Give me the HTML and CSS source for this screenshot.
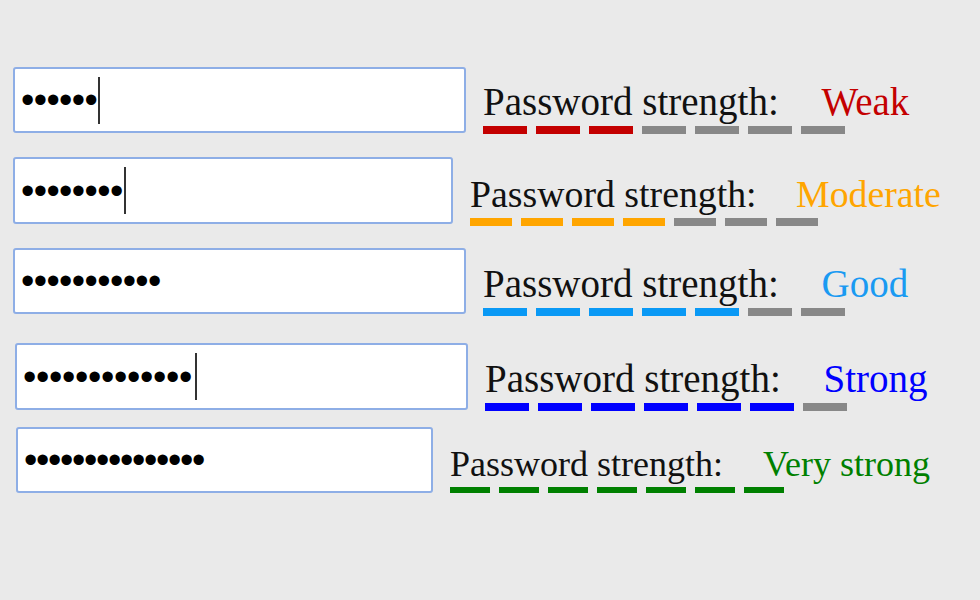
FILE: index.html
```html
<!DOCTYPE html>
<html lang="en">
<head>
  <meta charset="UTF-8" />
  <meta name="viewport" content="width=device-width, initial-scale=1.0" />
  <title>Password strength</title>
  <link rel="stylesheet" href="styles.css">
</head>
<body>
  <div class="rows">
    <div class="row row-weak">
      <div class="field"><span class="dots">••••••</span><span class="caret"></span></div>
      <div class="meter">
        <div class="label">Password strength: <span class="value">Weak</span></div>
        <div class="bar">
          <span class="on"></span><span class="on"></span><span class="on"></span><span></span><span></span><span></span><span></span>
        </div>
      </div>
    </div>

    <div class="row row-moderate">
      <div class="field"><span class="dots">••••••••</span><span class="caret"></span></div>
      <div class="meter">
        <div class="label">Password strength: <span class="value">Moderate</span></div>
        <div class="bar">
          <span class="on"></span><span class="on"></span><span class="on"></span><span class="on"></span><span></span><span></span><span></span>
        </div>
      </div>
    </div>

    <div class="row row-good">
      <div class="field"><span class="dots">•••••••••••</span></div>
      <div class="meter">
        <div class="label">Password strength: <span class="value">Good</span></div>
        <div class="bar">
          <span class="on"></span><span class="on"></span><span class="on"></span><span class="on"></span><span class="on"></span><span></span><span></span>
        </div>
      </div>
    </div>

    <div class="row row-strong">
      <div class="field"><span class="dots">•••••••••••••</span><span class="caret"></span></div>
      <div class="meter">
        <div class="label">Password strength: <span class="value">Strong</span></div>
        <div class="bar">
          <span class="on"></span><span class="on"></span><span class="on"></span><span class="on"></span><span class="on"></span><span class="on"></span><span></span>
        </div>
      </div>
    </div>

    <div class="row row-verystrong">
      <div class="field"><span class="dots">•••••••••••••••</span></div>
      <div class="meter">
        <div class="label">Password strength: <span class="value">Very strong</span></div>
        <div class="bar">
          <span class="on"></span><span class="on"></span><span class="on"></span><span class="on"></span><span class="on"></span><span class="on"></span><span class="on"></span>
        </div>
      </div>
    </div>
  </div>
</body>
</html>
```

FILE: styles.css
```css
body {
  margin: 0;
  background: #eaeaea;
  font-family: "Liberation Serif", "Times New Roman", serif;
  color: #111;
}
.rows {
  padding-top: 67px;
}
.row {
  display: flex;
  align-items: flex-end;
  gap: 17px;
  margin-left: 13px;
}
.field {
  box-sizing: border-box;
  width: 453px;
  height: 66px;
  background: #fff;
  border: 2px solid #8eaee6;
  border-radius: 3px;
  display: flex;
  align-items: center;
  padding-left: 6px;
}
.dots {
  font-family: "Liberation Sans", Arial, sans-serif;
  font-size: 38px;
  letter-spacing: -0.6px;
  line-height: 1;
  color: #000;
}
.caret {
  width: 2px;
  height: 47px;
  background: #333;
  margin-left: 1px;
}
.meter {
  margin-bottom: -1px;
}
.label {
  font-size: 39px;
  line-height: 1.1;
  white-space: nowrap;
}
.value {
  margin-left: 33px;
}
.bar {
  display: flex;
  gap: 9px;
  margin-top: 2px;
}
.bar span {
  width: 44px;
  height: 8px;
  background: #888;
}

.row-weak .value { color: #c40000; }
.row-weak .bar .on { background: #c40000; }

.row-moderate { margin-top: 24px; }
.row-moderate .field { width: 440px; height: 67px; }
.row-moderate .label { font-size: 37.8px; }
.row-moderate .value { color: #ffa500; margin-left: 30px; }
.row-moderate .bar span { width: 42px; }
.row-moderate .bar .on { background: #ffa500; }
.row-moderate .meter { margin-bottom: -2px; }

.row-good { margin-top: 24px; }
.row-good .value { color: #1a9af2; }
.row-good .bar .on { background: #0a99f5; }
.row-good .meter { margin-bottom: -2px; }

.row-strong { margin-top: 29px; margin-left: 15px; }
.row-strong .field { height: 67px; }
.row-strong .dots { letter-spacing: -0.3px; }
.row-strong .caret { margin-left: 3px; }
.row-strong .value { color: #0000ff; }
.row-strong .bar .on { background: #0000ff; }

.row-verystrong { margin-top: 17px; margin-left: 16px; }
.row-verystrong .field { width: 417px; }
.row-verystrong .dots { letter-spacing: -1.3px; }
.row-verystrong .label { font-size: 36px; }
.row-verystrong .value { color: #008000; margin-left: 31px; }
.row-verystrong .bar span { width: 40px; }
.row-verystrong .bar .on { background: #008000; }
.row-verystrong .meter { margin-bottom: -2px; }
```
